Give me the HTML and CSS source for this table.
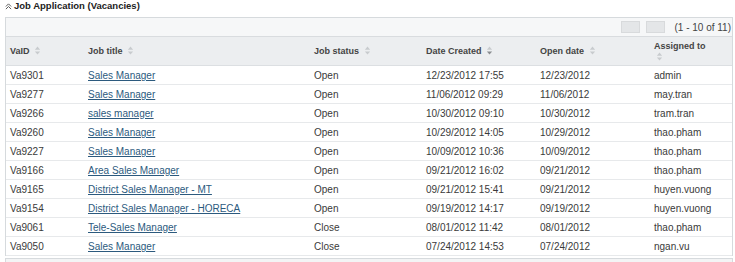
FILE: index.html
```html
<!DOCTYPE html>
<html>
<head>
<meta charset="utf-8">
<link rel="stylesheet" href="styles.css">
</head>
<body>
<div class="title"><svg class="chev" viewBox="0 0 8 8"><path d="M1 4 L4 1 L7 4 M1 7 L4 4 L7 7"/></svg>Job Application (Vacancies)</div>
<div class="panel">
  <div class="pager">
    <span class="pbtn"></span><span class="pbtn"></span>
    <span class="pinfo">(1 - 10 of 11)</span>
  </div>
  <table class="grid">
    <colgroup>
      <col class="c1"><col class="c2"><col class="c3"><col class="c4"><col class="c5"><col class="c6">
    </colgroup>
    <thead>
      <tr>
        <th>VaID <svg class="sort" viewBox="0 0 8 10"><path d="M4 0.5 L7 4 L1 4 Z M4 9.5 L7 6 L1 6 Z"/></svg></th>
        <th>Job title <svg class="sort" viewBox="0 0 8 10"><path d="M4 0.5 L7 4 L1 4 Z M4 9.5 L7 6 L1 6 Z"/></svg></th>
        <th>Job status <svg class="sort" viewBox="0 0 8 10"><path d="M4 0.5 L7 4 L1 4 Z M4 9.5 L7 6 L1 6 Z"/></svg></th>
        <th>Date Created <svg class="sort" viewBox="0 0 8 10"><path d="M4 0.5 L7 4 L1 4 Z"/><path class="on" d="M4 9.5 L7 6 L1 6 Z"/></svg></th>
        <th>Open date <svg class="sort" viewBox="0 0 8 10"><path d="M4 0.5 L7 4 L1 4 Z M4 9.5 L7 6 L1 6 Z"/></svg></th>
        <th class="two">Assigned to<br><svg class="sort" viewBox="0 0 8 10"><path d="M4 0.5 L7 4 L1 4 Z M4 9.5 L7 6 L1 6 Z"/></svg></th>
      </tr>
    </thead>
    <tbody>
      <tr><td>Va9301</td><td><a href="#">Sales Manager</a></td><td>Open</td><td>12/23/2012 17:55</td><td>12/23/2012</td><td>admin</td></tr>
      <tr><td>Va9277</td><td><a href="#">Sales Manager</a></td><td>Open</td><td>11/06/2012 09:29</td><td>11/06/2012</td><td>may.tran</td></tr>
      <tr><td>Va9266</td><td><a href="#">sales manager</a></td><td>Open</td><td>10/30/2012 09:10</td><td>10/30/2012</td><td>tram.tran</td></tr>
      <tr><td>Va9260</td><td><a href="#">Sales Manager</a></td><td>Open</td><td>10/29/2012 14:05</td><td>10/29/2012</td><td>thao.pham</td></tr>
      <tr><td>Va9227</td><td><a href="#">Sales Manager</a></td><td>Open</td><td>10/09/2012 10:36</td><td>10/09/2012</td><td>thao.pham</td></tr>
      <tr><td>Va9166</td><td><a href="#">Area Sales Manager</a></td><td>Open</td><td>09/21/2012 16:02</td><td>09/21/2012</td><td>thao.pham</td></tr>
      <tr><td>Va9165</td><td><a href="#">District Sales Manager - MT</a></td><td>Open</td><td>09/21/2012 15:41</td><td>09/21/2012</td><td>huyen.vuong</td></tr>
      <tr><td>Va9154</td><td><a href="#">District Sales Manager - HORECA</a></td><td>Open</td><td>09/19/2012 14:17</td><td>09/19/2012</td><td>huyen.vuong</td></tr>
      <tr><td>Va9061</td><td><a href="#">Tele-Sales Manager</a></td><td>Close</td><td>08/01/2012 11:42</td><td>08/01/2012</td><td>thao.pham</td></tr>
      <tr><td>Va9050</td><td><a href="#">Sales Manager</a></td><td>Close</td><td>07/24/2012 14:53</td><td>07/24/2012</td><td>ngan.vu</td></tr>
    </tbody>
  </table>
</div>
<div class="footbar"></div>
</body>
</html>
```
FILE: styles.css
```css
html, body {
  margin: 0;
  padding: 0;
  background: #fff;
}
body {
  font-family: "Liberation Sans", Arial, sans-serif;
  color: #3a3a3a;
  overflow: hidden;
}
.title {
  font-size: 9.5px;
  font-weight: bold;
  color: #222;
  height: 12px;
  line-height: 12px;
  padding: 0 0 0 5px;
  display: flex;
  align-items: center;
}
.chev {
  width: 7px;
  height: 7px;
  margin-right: 2px;
  fill: none;
  stroke: #555;
  stroke-width: 1.1;
}
.panel {
  margin: 5px 2px 0 5px;
  border: 1px solid #d6dadd;
  border-bottom: none;
}
.pager {
  height: 18px;
  background: #f6f7f8;
  border-bottom: 1px solid #d9dcdf;
  display: flex;
  align-items: center;
  justify-content: flex-end;
  padding-right: 1px;
}
.pbtn {
  width: 17px;
  height: 10px;
  background: #e4e6e8;
  border: 1px solid #d8dadc;
  margin-right: 6px;
}
.pinfo {
  font-size: 10px;
  color: #444;
  margin-left: 3px;
}
.grid {
  width: 100%;
  border-collapse: collapse;
  table-layout: fixed;
  font-size: 10px;
}
.c1 { width: 78px; }
.c2 { width: 226px; }
.c3 { width: 112px; }
.c4 { width: 114px; }
.c5 { width: 114px; }
.grid th {
  background: #eceef0;
  height: 27px;
  text-align: left;
  font-size: 9px;
  font-weight: bold;
  color: #444;
  padding: 0 4px;
  border-bottom: 1px solid #dcdfe2;
  vertical-align: middle;
}
.grid th.two {
  line-height: 11px;
  padding-top: 1px;
}
.sort {
  width: 7px;
  height: 9px;
  vertical-align: -1px;
  margin-left: 2px;
  fill: #c8cbce;
}
.sort .on { fill: #8a8d90; }
.grid td {
  height: 18px;
  padding: 0 4px;
  border-bottom: 1px solid #e7e9eb;
  white-space: nowrap;
  overflow: hidden;
}
.grid a {
  color: #2c5a7e;
  text-decoration: underline;
}
.footbar {
  margin: 2px 2px 0 5px;
  height: 10px;
  background: #f3f4f5;
  border: 1px solid #d6dadd;
}
```
